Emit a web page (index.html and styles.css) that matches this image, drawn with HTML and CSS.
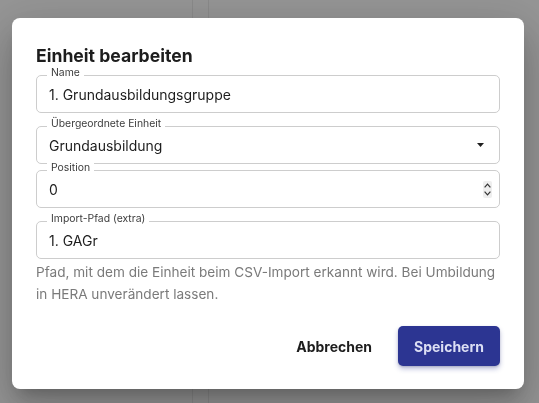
FILE: index.html
```html
<!DOCTYPE html>
<html lang="de">
<head>
<meta charset="utf-8">
<title>Einheit bearbeiten</title>
<link rel="stylesheet" href="styles.css">
</head>
<body>
<div class="page"><div class="rail"></div></div>
<div class="backdrop">
  <div class="dialog">
    <h2 class="title">Einheit bearbeiten</h2>

    <div class="field">
      <span class="label">Name</span>
      <div class="value">1. Grundausbildungsgruppe</div>
    </div>

    <div class="field field-select">
      <span class="label">Übergeordnete Einheit</span>
      <div class="value">Grundausbildung</div>
      <svg class="arrow" width="7" height="4" viewBox="0 0 7 4"><path d="M0 0H7L3.5 4Z" fill="#1f1f1f"/></svg>
    </div>

    <div class="field field-number">
      <span class="label">Position</span>
      <div class="value">0</div>
      <svg class="spinner" width="9" height="17" viewBox="0 0 9 17">
        <rect x="0" y="0" width="9" height="17" rx="2" fill="#eeeeee"/>
        <path d="M1.6 6.4L4.5 3.2L7.4 6.4" fill="none" stroke="#333" stroke-width="1.2"/>
        <path d="M1.6 10.6L4.5 13.8L7.4 10.6" fill="none" stroke="#333" stroke-width="1.2"/>
      </svg>
    </div>

    <div class="field field-import">
      <span class="label">Import-Pfad (extra)</span>
      <div class="value">1. GAGr</div>
    </div>
    <p class="helper">Pfad, mit dem die Einheit beim CSV-Import erkannt wird. Bei Umbildung<br>in HERA unverändert lassen.</p>

    <div class="actions">
      <button class="btn btn-text">Abbrechen</button>
      <button class="btn btn-primary">Speichern</button>
    </div>
  </div>
</div>
</body>
</html>
```

FILE: styles.css
```css
html, body {
  margin: 0;
  padding: 0;
  height: 100%;
}

body {
  background: #f8f8f8;
  font-family: Inter, "Noto Sans", "Liberation Sans", sans-serif;
  overflow: hidden;
}

.page {
  height: 100%;
  display: flex;
}

.rail {
  margin-left: 192px;
  width: 15px;
  height: 100%;
  border-left: 1px solid #e6e6e6;
  border-right: 1px solid #e6e6e6;
}

.backdrop {
  position: fixed;
  inset: 0;
  background: rgba(0, 0, 0, 0.4);
  padding: 18px 0 0 12px;
}

.dialog {
  width: 512px;
  height: 371px;
  box-sizing: border-box;
  background: #fff;
  border-radius: 8px;
  padding: 26px 24px 23px 24px;
  display: flex;
  flex-direction: column;
  box-shadow: 0 11px 15px -7px rgba(0, 0, 0, 0.2),
              0 24px 38px 3px rgba(0, 0, 0, 0.14),
              0 9px 46px 8px rgba(0, 0, 0, 0.12);
}

.title {
  margin: 0 0 7px 0;
  font-size: 17.6px;
  line-height: 24px;
  font-weight: 700;
  color: #1d1d1d;
}

.field {
  position: relative;
  height: 38px;
  box-sizing: border-box;
  border: 1px solid #cdcdcd;
  border-radius: 5px;
  display: flex;
  align-items: center;
  padding: 0 12px;
}

.field-select {
  margin-top: 13px;
  padding-right: 15px;
}

.field-number {
  margin-top: 6px;
  padding-right: 7px;
}

.field-import {
  margin-top: 13px;
}

.label {
  position: absolute;
  top: -9px;
  left: 10px;
  padding: 0 4px;
  background: #fff;
  font-size: 10.4px;
  line-height: 12px;
  color: #3c3c3c;
}

.value {
  flex: 1;
  font-size: 14px;
  line-height: 18px;
  padding-top: 1px;
  color: #1d1d1d;
}

.arrow,
.spinner {
  display: block;
  flex: none;
}

.helper {
  margin: 2px 0 0 0;
  font-size: 13.6px;
  line-height: 22px;
  color: #7a7a7a;
}

.actions {
  margin-top: auto;
  display: flex;
  justify-content: flex-end;
  align-items: center;
  gap: 10px;
}

.btn {
  height: 40px;
  border: none;
  border-radius: 5px;
  font-family: inherit;
  font-size: 14px;
  font-weight: 700;
  cursor: pointer;
}

.btn-text {
  background: transparent;
  color: #1d1d1d;
  padding: 0 16px;
}

.btn-primary {
  width: 102px;
  background: #2c3592;
  color: #dcdff4;
  box-shadow: 0 3px 5px rgba(44, 53, 146, 0.3), 0 1px 2px rgba(0, 0, 0, 0.15);
}
```
